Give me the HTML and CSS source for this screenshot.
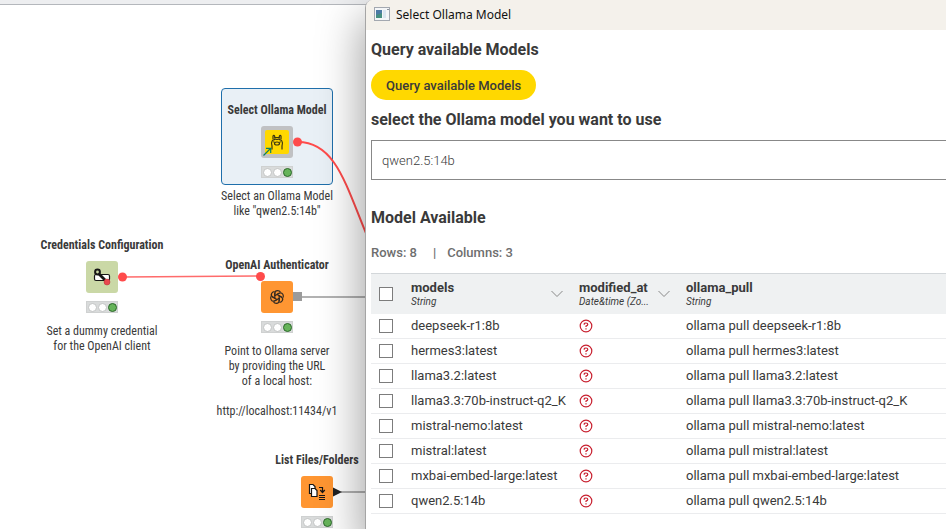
FILE: index.html
```html
<!DOCTYPE html>
<html lang="en">
<head>
    <meta charset="UTF-8">
    <meta name="viewport" content="width=device-width, initial-scale=1.0">
    <title>Select Ollama Model</title>
    <link rel="stylesheet" href="styles.css">
</head>
<body>
    <svg class="symbols" width="0" height="0">
        <symbol id="missing" viewBox="0 0 14 14">
            <circle cx="7" cy="7" r="5.8" fill="none" stroke="#c8202f" stroke-width="1.2"/>
            <path d="M5.2 5.8V5.2Q5.2 4 7 4T8.8 5.4Q8.8 6.3 7 7.1V8.1M7 9.2V10.4" fill="none" stroke="#c8202f" stroke-width="1.2"/>
        </symbol>
        <symbol id="chevron" viewBox="0 0 12 8">
            <path d="M.5 1L6 6.5L11.5 1" fill="none" stroke="#888" stroke-width="1"/>
        </symbol>
    </svg>

    <main class="workflow">
        <svg class="wires" width="400" height="529">
            <path d="M298 142C336 142 346 186 368 238" fill="none" stroke="#ff4b4b" stroke-width="2"/>
            <path d="M123 277L261 276" stroke="#ff6b6b" stroke-width="1.5"/>
            <path d="M301 297H370M341 492H370" stroke="#999" stroke-width="1.5"/>
            <circle cx="297.500" cy="142" r="4.500" fill="#ff4b4b"/>
            <circle cx="122.500" cy="277" r="4.500" fill="#ff4b4b"/>
            <rect x="293" y="292" width="9" height="9" fill="#9b9b9b"/>
            <path d="M333 487.500L342 492L333 496.500Z" fill="#222"/>
        </svg>

        <section class="node node-select">
            <h3>Select Ollama Model</h3>
            <svg class="node-icon" viewBox="0 0 32 32">
                <rect width="32" height="32" rx="3" fill="#c0c1c3"/>
                <rect x="4" y="4" width="24" height="24" rx="2" fill="#ffd800"/>
                <g fill="none" stroke="#3a3512" stroke-width="1.2">
                    <path d="M11 23.500V20Q10 17 11 15.200Q11.500 14 12.700 14Q14 12.600 16 13.500Q18 12.600 19.300 14Q20.500 14 21 15.200Q22 17 21 20V23.500"/>
                    <path d="M12 13.500V10Q12.800 8.700 13.700 10.300V12.500M20 13.500V10Q19.200 8.700 18.300 10.300V12.500M13.700 11.500H18.300"/>
                    <path d="M13.500 17.500Q13.500 16 16 16T18.500 17.500T16 19T13.500 17.500M12.300 15.800H13.300M18.700 15.800H19.700"/>
                </g>
                <path d="M2.500 29.500L9.500 22.500M5 22.300H9.700V27" fill="none" stroke="#087f64" stroke-width="1.200"/>
            </svg>
            <div class="lights"><i></i><i></i><i class="done"></i></div>
            <p>Select an Ollama Model<br>like "qwen2.5:14b"</p>
        </section>

        <section class="node node-credentials">
            <h3>Credentials Configuration</h3>
            <svg class="node-icon" viewBox="0 0 32 32">
                <rect width="32" height="32" rx="3" fill="#cad8a6"/>
                <rect x="8.500" y="13.500" width="15" height="6" rx="1.500" fill="#fff" stroke="#161616" stroke-width="1.200"/>
                <path d="M12 12L19 19" stroke="#161616" stroke-width="2.800"/>
                <circle cx="11.500" cy="11" r="2.400" fill="#cad8a6" stroke="#161616" stroke-width="2"/>
                <circle cx="21" cy="21" r="3" fill="#e8474e" stroke="#b52b35" stroke-width=".5"/>
            </svg>
            <div class="lights"><i></i><i></i><i class="done"></i></div>
            <p>Set a dummy credential<br>for the OpenAI client</p>
        </section>

        <section class="node node-openai">
            <h3>OpenAI Authenticator</h3>
            <svg class="node-icon" viewBox="0 0 32 32">
                <rect width="32" height="32" rx="3" fill="#ff9632"/>
                <g transform="translate(16 16)" fill="none" stroke="#332a22" stroke-width="1.200">
                    <path id="petal" d="M-2.200 1.200V-3.600Q-2.200-6.400 .6-6.400Q2.600-6.400 3.500-4.800M-.2-2.400L2.600-4"/>
                    <use href="#petal" transform="rotate(60)"/>
                    <use href="#petal" transform="rotate(120)"/>
                    <use href="#petal" transform="rotate(180)"/>
                    <use href="#petal" transform="rotate(240)"/>
                    <use href="#petal" transform="rotate(300)"/>
                </g>
            </svg>
            <div class="lights"><i></i><i></i><i class="done"></i></div>
            <p>Point to Ollama server<br>by providing the URL<br>of a local host:<br><br>http://localhost:11434/v1</p>
        </section>
        <span class="port"></span>

        <section class="node node-files">
            <h3>List Files/Folders</h3>
            <svg class="node-icon" viewBox="0 0 32 32">
                <rect width="32" height="32" rx="3" fill="#ff9632"/>
                <g fill="#fff" stroke="#161616" stroke-width="1.200">
                    <path d="M8.500 8.500H12L14 10.500V17.500H8.500Z"/>
                    <path d="M10.500 12.500H14L16 14.500V20.500H10.500Z"/>
                </g>
                <path d="M18 11.500H21.500V15.500M19.200 14L21.500 16.500L23.800 14M18 19.500H24M18 21.500H24M18 23.500H24" fill="none" stroke="#161616" stroke-width="1.200"/>
            </svg>
            <div class="lights"><i></i><i></i><i class="done"></i></div>
        </section>
    </main>

    <div class="dialog">
        <header class="titlebar">
            <svg width="16" height="14" viewBox="0 0 16 14">
                <rect x=".5" y=".5" width="15" height="13" fill="#f4f6f8" stroke="#a3a8b0"/>
                <rect x="2" y="3" width="6" height="8" fill="#468f80"/>
                <path d="M2 3H8V6L2 8Z" fill="#4d7ba5"/>
                <rect x="9" y="3" width="3" height="8" fill="#dbe6f0"/>
                <path d="M13 2.500H15" stroke="#8d949c"/>
            </svg>
            <span>Select Ollama Model</span>
        </header>

        <div class="content">
            <h2>Query available Models</h2>
            <button class="query" type="button">Query available Models</button>
            <label class="heading" for="model">select the Ollama model you want to use</label>
            <input class="model-input" id="model" type="text" value="qwen2.5:14b">

            <h2 class="available">Model Available</h2>
            <div class="counts"><span>Rows: 8</span><span class="divider">|</span><span>Columns: 3</span></div>

            <table>
                <thead>
                    <tr>
                        <th class="check"><input type="checkbox" aria-label="Select all"></th>
                        <th class="models"><div class="column"><div>models<small>String</small></div><svg width="12" height="8"><use href="#chevron"/></svg></div></th>
                        <th class="modified"><div class="column"><div>modified_at<small>Date&amp;time (Zo...</small></div><svg width="12" height="8"><use href="#chevron"/></svg></div></th>
                        <th>ollama_pull<small>String</small></th>
                    </tr>
                </thead>
                <tbody>
                    <tr>
                        <td><input type="checkbox" aria-label="deepseek-r1:8b"></td>
                        <td>deepseek-r1:8b</td>
                        <td><svg width="14" height="14"><use href="#missing"/></svg></td>
                        <td>ollama pull deepseek-r1:8b</td>
                    </tr>
                    <tr>
                        <td><input type="checkbox" aria-label="hermes3:latest"></td>
                        <td>hermes3:latest</td>
                        <td><svg width="14" height="14"><use href="#missing"/></svg></td>
                        <td>ollama pull hermes3:latest</td>
                    </tr>
                    <tr>
                        <td><input type="checkbox" aria-label="llama3.2:latest"></td>
                        <td>llama3.2:latest</td>
                        <td><svg width="14" height="14"><use href="#missing"/></svg></td>
                        <td>ollama pull llama3.2:latest</td>
                    </tr>
                    <tr>
                        <td><input type="checkbox" aria-label="llama3.3:70b-instruct-q2_K"></td>
                        <td>llama3.3:70b-instruct-q2_K</td>
                        <td><svg width="14" height="14"><use href="#missing"/></svg></td>
                        <td>ollama pull llama3.3:70b-instruct-q2_K</td>
                    </tr>
                    <tr>
                        <td><input type="checkbox" aria-label="mistral-nemo:latest"></td>
                        <td>mistral-nemo:latest</td>
                        <td><svg width="14" height="14"><use href="#missing"/></svg></td>
                        <td>ollama pull mistral-nemo:latest</td>
                    </tr>
                    <tr>
                        <td><input type="checkbox" aria-label="mistral:latest"></td>
                        <td>mistral:latest</td>
                        <td><svg width="14" height="14"><use href="#missing"/></svg></td>
                        <td>ollama pull mistral:latest</td>
                    </tr>
                    <tr>
                        <td><input type="checkbox" aria-label="mxbai-embed-large:latest"></td>
                        <td>mxbai-embed-large:latest</td>
                        <td><svg width="14" height="14"><use href="#missing"/></svg></td>
                        <td>ollama pull mxbai-embed-large:latest</td>
                    </tr>
                    <tr>
                        <td><input type="checkbox" aria-label="qwen2.5:14b"></td>
                        <td>qwen2.5:14b</td>
                        <td><svg width="14" height="14"><use href="#missing"/></svg></td>
                        <td>ollama pull qwen2.5:14b</td>
                    </tr>
                </tbody>
            </table>
        </div>
    </div>
</body>
</html>
```

FILE: styles.css
```css
* { margin: 0; padding: 0; box-sizing: border-box; }
body {
    position: relative;
    height: 100vh;
    overflow: hidden;
    background: #fff;
    color: #3a3a3a;
    font-family: Roboto, "Liberation Sans", sans-serif;
    font-size: 13px;
}
svg {
    display: block;
    flex: none;
}
.symbols {
    position: absolute;
}

/* workflow canvas */
.workflow {
    height: 100%;
    border-top: 4px solid #edeef0;
    box-shadow: inset 0 1px #b4b7bc;
}
.wires {
    position: absolute;
    top: 0;
    left: 0;
}
.node {
    position: absolute;
    width: 160px;
    display: flex;
    flex-direction: column;
    align-items: center;
    gap: 8px;
    font-family: "Roboto Condensed", "Liberation Sans Narrow", Roboto, sans-serif;
    font-size: 12px;
    text-align: center;
}
.node h3 {
    font-size: 12px;
    line-height: 16px;
    font-weight: 700;
}
.node p {
    line-height: 15px;
    padding-top: 3px;
}
.node-icon {
    width: 32px;
    height: 32px;
}
.node-select { left: 197px; top: 102px; }
.node-credentials { left: 22px; top: 237px; }
.node-openai { left: 197px; top: 257px; }
.node-files { left: 237px; top: 452px; }
.node-select::before {
    content: "";
    position: absolute;
    z-index: -1;
    top: -14px;
    left: 24px;
    box-sizing: border-box;
    width: 112px;
    height: 97px;
    background: #e9f0f6;
    border: 1px solid #1f6fab;
    border-radius: 4px;
}
.lights {
    width: 32px;
    height: 12px;
    display: flex;
    align-items: center;
    justify-content: center;
    gap: 1px;
    background: #d9dbdb;
    border: 1px solid #cfd1d1;
}
.lights i {
    width: 9px;
    height: 9px;
    border-radius: 50%;
    background: #fff;
    border: 1px solid #c2c4c4;
}
.lights .done {
    background: #66b45a;
    border-color: #2b682b;
}
.port {
    position: absolute;
    left: 256px;
    top: 272px;
    width: 9px;
    height: 9px;
    border-radius: 50%;
    background: #ff4b4b;
}

/* dialog window */
.dialog {
    position: absolute;
    top: 0;
    right: 0;
    bottom: 0;
    left: 365px;
    overflow: hidden;
    background: #fff;
    border-left: 1px solid #a5a5a5;
    border-top-left-radius: 8px;
    box-shadow: 0 20px 44px 4px rgba(0, 0, 0, 0.36);
}
.titlebar {
    height: 30px;
    display: flex;
    align-items: center;
    gap: 6px;
    padding: 0 8px 2px;
    background: #f4f1eb;
    color: #111;
    font-family: "Noto Sans", "Open Sans", sans-serif;
    font-size: 12px;
}
.content {
    padding-left: 5px;
}
h2, .heading {
    display: block;
    font-size: 16px;
    font-weight: 700;
    line-height: 20px;
}
.content h2 {
    padding-top: 10px;
}
.query {
    display: block;
    height: 30px;
    margin: 10px 0;
    padding: 0 15px;
    border: none;
    border-radius: 15px;
    background: #ffd800;
    color: #3a3a3a;
    font-family: inherit;
    font-size: 13px;
    font-weight: 500;
    cursor: pointer;
}
.model-input {
    display: block;
    width: 100%;
    height: 40px;
    margin-top: 10px;
    padding: 0 10px;
    border: 1px solid #888;
    border-right: none;
    color: #3a3a3a;
    font-family: inherit;
    font-size: 13px;
    font-weight: 300;
}
.content .available {
    padding-top: 28px;
}
.counts {
    display: flex;
    gap: 11px;
    margin: 15px 0 10px;
    color: #6e6e6e;
    font-weight: 500;
    line-height: 20px;
}
.divider {
    padding-left: 5px;
}
table {
    width: 100%;
    table-layout: fixed;
    border-collapse: separate;
    border-spacing: 0;
}
th {
    height: 41px;
    border-top: 1px solid #d3d7da;
    background: #eff1f2;
    font-weight: 700;
    line-height: 15px;
    text-align: left;
    padding-left: 10px;
}
th small {
    display: block;
    font-size: 10px;
    font-style: italic;
    font-weight: 400;
    line-height: 14px;
    white-space: nowrap;
}
.column {
    display: flex;
    align-items: center;
    justify-content: space-between;
    padding-right: 6px;
}
.check { width: 30px; }
.models { width: 168px; }
.modified { width: 107px; }
td {
    height: 25px;
    padding-left: 10px;
    border-bottom: 1px solid #ebecee;
    line-height: 20px;
    white-space: nowrap;
}
th:first-child, td:first-child {
    padding-left: 8px;
}
input[type="checkbox"] {
    appearance: none;
    display: block;
    width: 14px;
    height: 14px;
    border: 1px solid #7c7c7c;
    background: #fff;
}
```
